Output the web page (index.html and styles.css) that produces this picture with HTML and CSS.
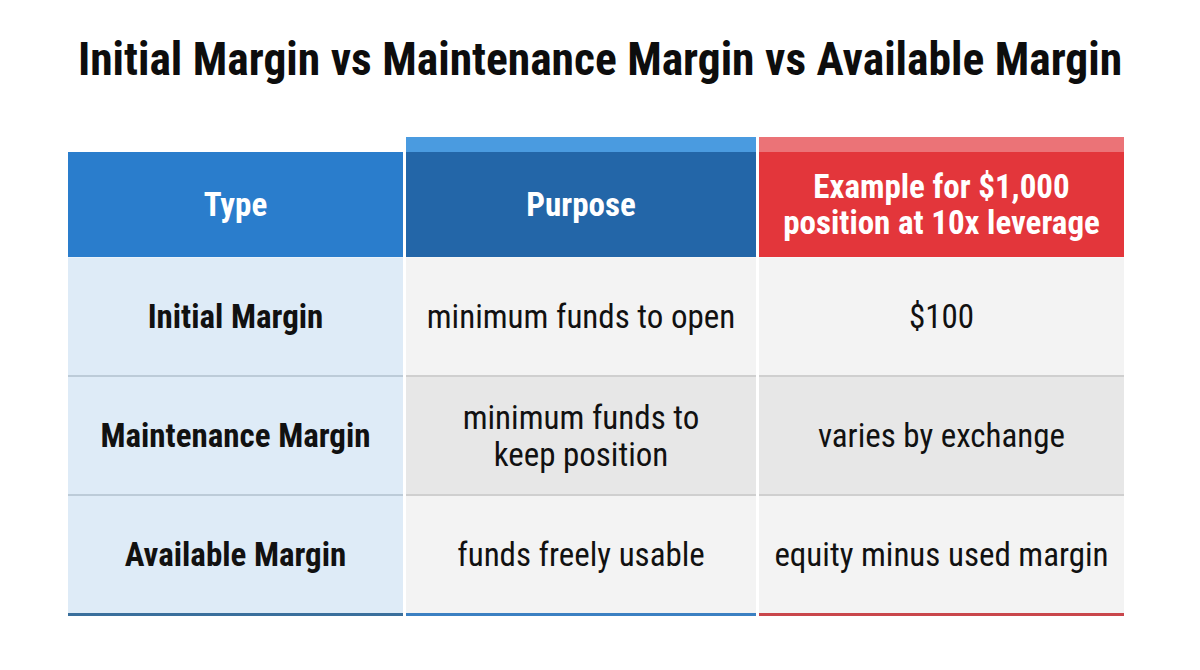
FILE: index.html
```html
<!DOCTYPE html>
<html>
<head>
<meta charset="utf-8">
<link rel="stylesheet" href="styles.css">
</head>
<body>
<main class="page">
  <h1 class="title">Initial Margin vs Maintenance Margin vs Available Margin</h1>
  <div class="table">
    <div class="col col-type">
      <div class="head">Type</div>
      <div class="cell label">Initial Margin</div>
      <div class="cell label">Maintenance Margin</div>
      <div class="cell label">Available Margin</div>
    </div>
    <div class="col col-purpose">
      <div class="head">Purpose</div>
      <div class="cell">minimum funds to open</div>
      <div class="cell alt">minimum funds to<br>keep position</div>
      <div class="cell">funds freely usable</div>
    </div>
    <div class="col col-example">
      <div class="head">Example for $1,000<br>position at 10x leverage</div>
      <div class="cell">$100</div>
      <div class="cell alt">varies by exchange</div>
      <div class="cell">equity minus used margin</div>
    </div>
  </div>
</main>
</body>
</html>
```
FILE: styles.css
```css
html, body {
  margin: 0;
  padding: 0;
  background: #ffffff;
}
.page {
  width: 1200px;
  height: 670px;
  font-family: "Roboto Condensed", "DejaVu Sans Condensed", Roboto, sans-serif;
  color: #111111;
  display: flex;
  flex-direction: column;
}
.title {
  margin: 35px 0 0 0;
  font-size: 45.5px;
  line-height: 50px;
  font-weight: 700;
  text-align: center;
  color: #0d0d0d;
  white-space: nowrap;
}
.table {
  margin-top: 52px;
  margin-left: 68px;
  display: grid;
  grid-template-columns: 335px 350px 365px;
  column-gap: 3px;
  align-items: end;
  width: 1056px;
}
.col {
  display: flex;
  flex-direction: column;
}
.head {
  height: 105px;
  display: flex;
  align-items: center;
  justify-content: center;
  text-align: center;
  color: #ffffff;
  font-weight: 700;
  font-size: 33px;
  line-height: 36px;
}
.col-type .head {
  background: #2a7dcc;
}
.col-purpose .head {
  background: #2366a8;
  border-top: 15px solid #4a9be0;
}
.col-example .head {
  background: #e3363b;
  border-top: 15px solid #eb7377;
}
.cell {
  height: 117px;
  display: flex;
  align-items: center;
  justify-content: center;
  text-align: center;
  font-size: 33px;
  line-height: 37px;
  background: #f3f3f3;
  border-top: 2px solid #cfcfcf;
}
.cell:nth-child(2) {
  border-top: 1px solid #f7f7f7;
}
.cell.alt {
  background: #e7e7e7;
}
.cell:last-child {
  border-bottom: 3px solid #3b80c2;
}
.col-type .cell {
  background: #deebf7;
  border-top-color: #bccbd8;
  font-weight: 700;
  font-size: 33px;
}
.col-type .cell:nth-child(2) {
  border-top-color: #e9f2fa;
}
.col-type .cell:last-child {
  border-bottom-color: #3a6f9c;
}
.col-example .cell:last-child {
  border-bottom-color: #c9464b;
}
```
